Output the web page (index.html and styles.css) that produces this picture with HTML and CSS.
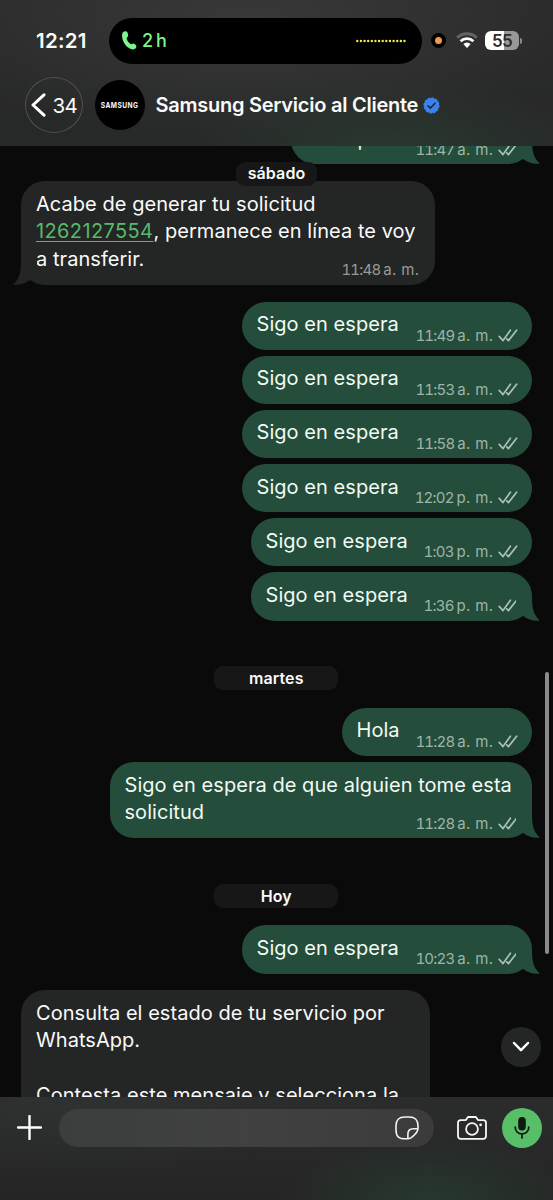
FILE: index.html
```
<!DOCTYPE html>
<html lang="es">
<head>
<meta charset="utf-8">
<title>Samsung Servicio al Cliente</title>
<link rel="stylesheet" href="styles.css">
</head>
<body>
<svg width="0" height="0" class="defs">
  <symbol id="checks" viewBox="0 0 20 13"><path d="M1.2 7.4 5 11.6 12.4 1.2M8.8 9.9 10.4 11.6 18.6 1.2" fill="none" stroke="currentColor" stroke-width="1.7" stroke-linecap="round" stroke-linejoin="round"/></symbol>
  <symbol id="tail" viewBox="0 0 24 24"><path d="M0 0H16C16 11 17.5 18 23.8 23.4C18 24.2 12 23 8 19.5C5 18 1 20 0 20Z" fill="currentColor"/></symbol>
</svg>
<div class="screen">
  <header class="header">
    <div class="status">
      <span class="clock">12:21</span>
      <div class="island">
        <svg class="phone" width="15" height="19" viewBox="0 0 15 19"><path d="M1 1.2C2.2-.1 4.6-.1 5.3 1.3C6.1 2.9 6.5 4.6 5.7 5.7C5 6.7 4.4 7.1 4.8 8.2C5.6 10.2 7 12 8.8 13C9.8 13.5 10.2 12.5 11.3 12.4C12.6 12.3 14 13.9 14.3 15.1C14.6 16.5 13.2 18.2 11.4 18.4C8.3 18.6 4.2 15.8 2.1 12C.3 8.8-.8 3.2 1 1.2Z" fill="#7bf58d"/></svg>
        <span class="call-time">2 h</span>
        <svg class="wave" width="50" height="4" viewBox="0 0 50 4"><path d="M1.3 2H49" stroke="#efe957" stroke-width="2.4" stroke-linecap="round" stroke-dasharray="0.01 3.62"/></svg>
      </div>
      <span class="mic-dot"></span>
      <svg class="wifi" width="22" height="17" viewBox="0 0 22 17"><path d="M1.2 5.7A14 14 0 0 1 20.8 5.7" fill="none" stroke="#646464" stroke-width="2.9"/><path d="M4.6 9.3A9.2 9.2 0 0 1 17.4 9.3" fill="none" stroke="#fff" stroke-width="2.8"/><path d="M7.3 12.1A5.3 5.3 0 0 1 14.7 12.1L11 16Z" fill="#fff"/></svg>
      <div class="battery"><span>55</span></div>
      <i class="battery-cap"></i>
    </div>
    <div class="nav">
      <div class="back"><svg width="15" height="24" viewBox="0 0 15 24"><path d="M13 1.8 2 12 13 22.2" fill="none" stroke="#fff" stroke-width="3" stroke-linecap="round" stroke-linejoin="round"/></svg><span>34</span></div>
      <div class="avatar"><span>SAMSUNG</span></div>
      <h1 class="name">Samsung Servicio al Cliente</h1>
      <svg class="verified" width="17" height="17" viewBox="0 0 17 17"><circle cx="8.5" cy="8.5" r="7.3" fill="#3982f0"/><circle cx="8.5" cy="8.5" r="7.2" fill="none" stroke="#3982f0" stroke-width="1.6" stroke-linecap="round" stroke-dasharray="1.8 1.97"/><path d="M5 8.8 7.4 11.1 12 6.2" fill="none" stroke="#202830" stroke-width="1.6" stroke-linecap="round" stroke-linejoin="round"/></svg>
    </div>
  </header>

  <main class="chat">
    <div class="bubble out clipped"><p>En espera</p><div class="meta"><time>11:47</time>a. m.<svg class="checks"><use href="#checks"/></svg></div><svg class="tail"><use href="#tail"/></svg></div>
    <div class="bubble in first"><p>Acabe de generar tu solicitud<br><a>1262127554</a>, permanece en línea te voy<br>a transferir.</p><div class="meta"><time>11:48</time>a. m.</div><svg class="tail"><use href="#tail"/></svg></div>
    <div class="bubble out long"><p>Sigo en espera</p><div class="meta"><time>11:49</time>a. m.<svg class="checks"><use href="#checks"/></svg></div></div>
    <div class="bubble out long"><p>Sigo en espera</p><div class="meta"><time>11:53</time>a. m.<svg class="checks"><use href="#checks"/></svg></div></div>
    <div class="bubble out long"><p>Sigo en espera</p><div class="meta"><time>11:58</time>a. m.<svg class="checks"><use href="#checks"/></svg></div></div>
    <div class="bubble out long"><p>Sigo en espera</p><div class="meta"><time>12:02</time>p. m.<svg class="checks"><use href="#checks"/></svg></div></div>
    <div class="bubble out medium"><p>Sigo en espera</p><div class="meta"><time>1:03</time>p. m.<svg class="checks"><use href="#checks"/></svg></div></div>
    <div class="bubble out medium"><p>Sigo en espera</p><div class="meta"><time>1:36</time>p. m.<svg class="checks"><use href="#checks"/></svg></div><svg class="tail"><use href="#tail"/></svg></div>
    <div class="day">martes</div>
    <div class="bubble out short"><p>Hola</p><div class="meta"><time>11:28</time>a. m.<svg class="checks"><use href="#checks"/></svg></div></div>
    <div class="bubble out wide"><p>Sigo en espera de que alguien tome esta<br>solicitud</p><div class="meta"><time>11:28</time>a. m.<svg class="checks"><use href="#checks"/></svg></div><svg class="tail"><use href="#tail"/></svg></div>
    <div class="day">Hoy</div>
    <div class="bubble out long"><p>Sigo en espera</p><div class="meta"><time>10:23</time>a. m.<svg class="checks"><use href="#checks"/></svg></div><svg class="tail"><use href="#tail"/></svg></div>
    <div class="bubble in last"><p>Consulta el estado de tu servicio por<br>WhatsApp.<br><br>Contesta este mensaje y selecciona la</p></div>
    <div class="floating-day">sábado</div>
    <div class="scrollbar"></div>
    <div class="jump"><svg width="18" height="12" viewBox="0 0 18 12"><path d="M2 2 9 9.2 16 2" fill="none" stroke="#fff" stroke-width="2.5" stroke-linecap="round" stroke-linejoin="round"/></svg></div>
  </main>

  <footer class="composer">
    <svg class="plus" width="25" height="25" viewBox="0 0 25 25"><path d="M12.5 1V24M1 12.5H24" stroke="#fff" stroke-width="2.4" stroke-linecap="round"/></svg>
    <div class="field"><svg width="24" height="24" viewBox="0 0 24 24" fill="none" stroke="#f4f4f4" stroke-width="1.6" stroke-linejoin="round"><path d="M12.8 22.8H10C3.4 22.8 1 20.2 1 13.8V10C1 3.5 3.5 1 10 1H14C20.5 1 23 3.5 23 10V12.2C23 16.2 16.6 22.8 12.8 22.8Z"/><path d="M12.9 22.5V18.2C12.9 14.3 14.3 12.8 18.2 12.8H22.8"/></svg></div>
    <svg class="camera" width="30" height="24" viewBox="0 0 30 24" fill="none" stroke="#f6f6f6" stroke-width="1.8" stroke-linejoin="round"><path d="M3.8 4.2H8.2Q9 4.2 9.5 3.3L10.3 1.9Q10.8 1 11.9 1H18Q19.1 1 19.6 1.9L20.4 3.3Q20.9 4.2 21.8 4.2H26.2Q29 4.2 29 7V20Q29 22.8 26.2 22.8H3.8Q1 22.8 1 20V7Q1 4.2 3.8 4.2Z"/><circle cx="15" cy="13" r="5.9"/><circle cx="23.6" cy="8.8" r="1.4" fill="#f6f6f6" stroke="none"/></svg>
    <div class="record"><svg width="16" height="22" viewBox="0 0 16 22"><rect x="4.2" y="0" width="7.6" height="13.6" rx="3.8" fill="#10180f"/><path d="M1.3 10V10.7A6.7 6.2 0 0 0 14.7 10.7V10M8 17V21" fill="none" stroke="#10180f" stroke-width="1.7" stroke-linecap="round"/></svg></div>
  </footer>
</div>
</body>
</html>
```
FILE: styles.css
```
* { box-sizing: border-box; }
body { margin: 0; background: #0a0a0a; font-family: Inter, "Liberation Sans", sans-serif; color: #fafafa; }
svg { display: block; flex: none; }
.defs { position: absolute; }
.screen { width: 553px; height: 1200px; display: flex; flex-direction: column; overflow: hidden; }

.header {
  height: 145.5px; flex: none;
  background:
    radial-gradient(ellipse 210px 70px at 390px 150px, rgba(42, 62, 50, .75), transparent),
    radial-gradient(ellipse 330px 120px at 250px 20px, rgba(66, 66, 66, .6), transparent),
    linear-gradient(#2b2b2b, #272828);
}
.status { display: flex; align-items: center; height: 64px; padding: 17.5px 0 0 36px; }
.clock { width: 73px; font-size: 20.5px; font-weight: 600; letter-spacing: .25px; }
.island { width: 313px; height: 46px; border-radius: 23px; background: #000; display: flex; align-items: center; padding: 0 16px 0 13px; }
.call-time { margin-left: 5px; color: #7bf58d; font-size: 18px; font-weight: 500; letter-spacing: -.2px; word-spacing: -1.5px; }
.wave { margin-left: auto; }
.mic-dot { width: 15px; height: 15px; margin-left: 9px; border-radius: 50%; background: #f39a4a; border: 4px solid #000; flex: none; }
.wifi { margin-left: 10px; }
.battery { width: 34px; height: 19px; margin-left: 7px; border-radius: 6px; background: linear-gradient(90deg, #fff 56%, #989898 56%); text-align: center; color: #2b2b2b; font-size: 17px; line-height: 20px; font-weight: 600; letter-spacing: -.6px; }
.battery-cap { width: 2px; height: 6px; margin-left: 1px; border-radius: 0 2px 2px 0; background: #8b8b8b; }
.nav { display: flex; align-items: center; height: 82px; padding-left: 25px; }
.back { width: 58px; height: 56px; border: 1px solid #505050; border-radius: 50%; display: flex; align-items: center; padding-left: 5px; font-size: 20.5px; letter-spacing: -.6px; }
.back span { margin-left: 6.5px; }
.avatar { width: 50px; height: 50px; margin-left: 12px; border-radius: 50%; background: #000; display: flex; align-items: center; justify-content: center; }
.avatar span { font-size: 7.6px; font-weight: 700; letter-spacing: .5px; transform: scaleX(.87); }
.name { margin: 0 0 0 10.5px; font-size: 20px; line-height: 26px; font-weight: 600; letter-spacing: -.25px; white-space: nowrap; }
.verified { margin-left: 4.5px; }

.chat { height: 951.5px; flex: none; position: relative; overflow: hidden; display: flex; flex-direction: column; padding: 0 21.5px 0 21px; background: #0a0a0a; }
.bubble { position: relative; flex: none; display: grid; padding: 9.5px 14px 11.4px 15px; border-radius: 24px; margin-bottom: 5.7px; }
.bubble > p, .bubble > .meta { grid-area: 1 / 1; }
.bubble p { margin: 0; font-size: 20px; line-height: 27.5px; letter-spacing: .05px; white-space: nowrap; }
.out { align-self: flex-end; background: #254d3b; color: #f0fbf4; }
.in { align-self: flex-start; background: #242626; }
.meta { align-self: end; justify-self: end; display: flex; align-items: center; height: 18px; margin-bottom: -5.5px; font-size: 15px; letter-spacing: .35px; white-space: nowrap; color: #9cb5a8; }
.meta time { margin-right: 3px; font-variant-numeric: tabular-nums; letter-spacing: -.8px; }
.in .meta { margin-right: 1.5px; color: #989a9a; }
.checks { width: 20px; height: 13px; margin-left: 4px; color: #a9c1b4; }
.tail { position: absolute; right: -8px; bottom: 0; width: 24px; height: 24px; color: #254d3b; }
.in .tail { right: auto; left: -8px; transform: scaleX(-1); color: #242626; }
.clipped { width: 241px; margin-top: -29.5px; margin-bottom: 17px; }
.first { width: 414px; margin-bottom: 17px; }
.first a { letter-spacing: .38px; color: #58b96c; text-decoration: underline; text-decoration-thickness: 1.3px; text-underline-offset: 3px; }
.long { width: 290px; }
.medium { width: 281px; }
.short { width: 190px; }
.wide { width: 422px; }
.last { width: 409px; margin-top: 11px; }
.day { flex: none; align-self: center; width: 124px; height: 24px; margin: 40px 0 17.7px; border-radius: 9px; background: #171717; text-align: center; font-size: 16px; font-weight: 600; line-height: 24px; letter-spacing: .1px; }
.floating-day { position: absolute; left: 236px; top: 16px; width: 81px; height: 24px; border-radius: 9px; background: #171717; text-align: center; font-size: 16px; font-weight: 600; line-height: 23px; letter-spacing: .1px; }
.scrollbar { position: absolute; right: 4px; top: 526px; width: 4px; height: 282px; border-radius: 2px; background: #8b8b8b; }
.jump { position: absolute; left: 501px; top: 881px; width: 40px; height: 40px; border-radius: 50%; background: #242626; display: flex; align-items: center; justify-content: center; }

.composer {
  flex: 1; display: flex; align-items: flex-start; padding: 10px 11.5px 0 17px;
  background:
    radial-gradient(ellipse 150px 60px at 430px 103px, rgba(38, 62, 48, .8), transparent),
    radial-gradient(ellipse 230px 80px at 80px 0, rgba(46, 52, 50, .8), transparent),
    linear-gradient(#2b2c2c, #252525);
}
.plus { margin-top: 8px; }
.field { width: 375px; height: 38px; margin: 2px 0 0 17px; border-radius: 19px; background: linear-gradient(90deg, #3b3e3d, #414141 50%, #3b3b3b); display: flex; align-items: center; justify-content: flex-end; padding-right: 15px; }
.camera { margin: 9px 0 0 22.5px; }
.record { width: 40px; height: 40px; margin: .5px 0 0 auto; border-radius: 50%; background: #58be68; display: flex; align-items: center; justify-content: center; }
```
